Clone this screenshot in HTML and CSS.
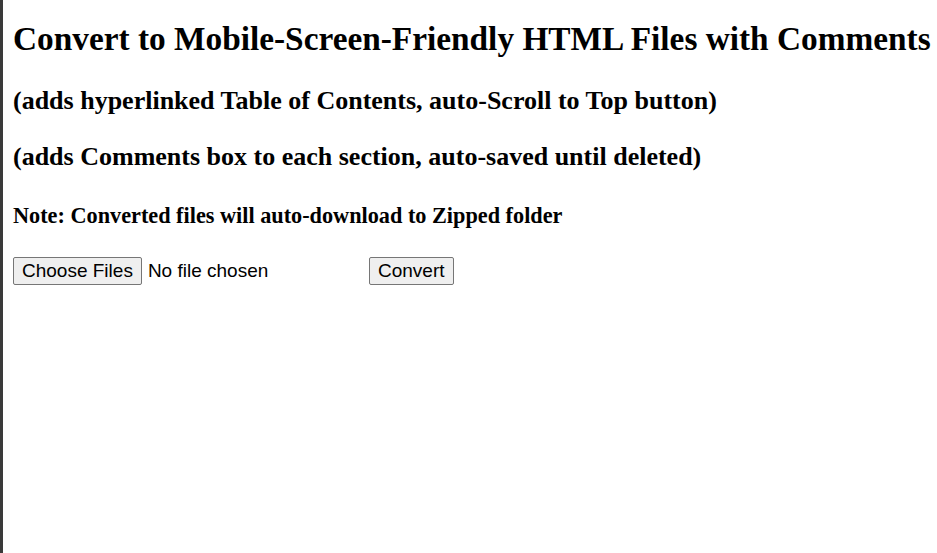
FILE: index.html
```html
<!DOCTYPE html>
<html lang="en">
<head>
<meta charset="utf-8">
<title>Convert to Mobile-Screen-Friendly HTML Files with Comments</title>
<link rel="stylesheet" href="styles.css">
</head>
<body>
<h1 class="title">Convert to Mobile-Screen-Friendly HTML Files with Comments</h1>
<h2 class="sub sub-first">(adds hyperlinked Table of Contents, auto-Scroll to Top button)</h2>
<h2 class="sub sub-second">(adds Comments box to each section, auto-saved until deleted)</h2>
<h3 class="note">Note: Converted files will auto-download to Zipped folder</h3>
<div class="controls">
  <input class="file" type="file" multiple>
  <button class="convert" type="button">Convert</button>
</div>
</body>
</html>
```
FILE: styles.css
```css
html {
  border-left: 3px solid #3a3a3a;
  box-sizing: border-box;
  height: 100%;
}
body {
  margin: 0;
  padding: 0 8px 8px 10px;
  font-family: "Liberation Serif", "Times New Roman", serif;
  color: #000;
  background: #fff;
}
.title {
  font-size: 33.33px;
  line-height: normal;
  margin: 0;
  padding-top: 20px;
  white-space: nowrap;
}
.sub {
  font-size: 26px;
  line-height: normal;
  margin: 0;
}
.sub-first {
  margin-top: 28px;
}
.sub-second {
  margin-top: 26px;
}
.note {
  font-size: 22.25px;
  line-height: normal;
  margin: 31px 0 0;
}
.controls {
  display: flex;
  align-items: center;
  margin-top: 28px;
}
.file {
  font-family: "Liberation Sans", Arial, sans-serif;
  font-size: 19px;
  width: 356px;
  margin: 0;
  padding: 0;
}
.file::file-selector-button,
.convert {
  font-family: "Liberation Sans", Arial, sans-serif;
  font-size: 19px;
  line-height: 22px;
  color: #000;
  background: #efefef;
  border: 1px solid #767676;
  border-radius: 2px;
  padding: 2px 8px;
  margin: 0;
}
.file::file-selector-button {
  margin-right: 6px;
}
```
